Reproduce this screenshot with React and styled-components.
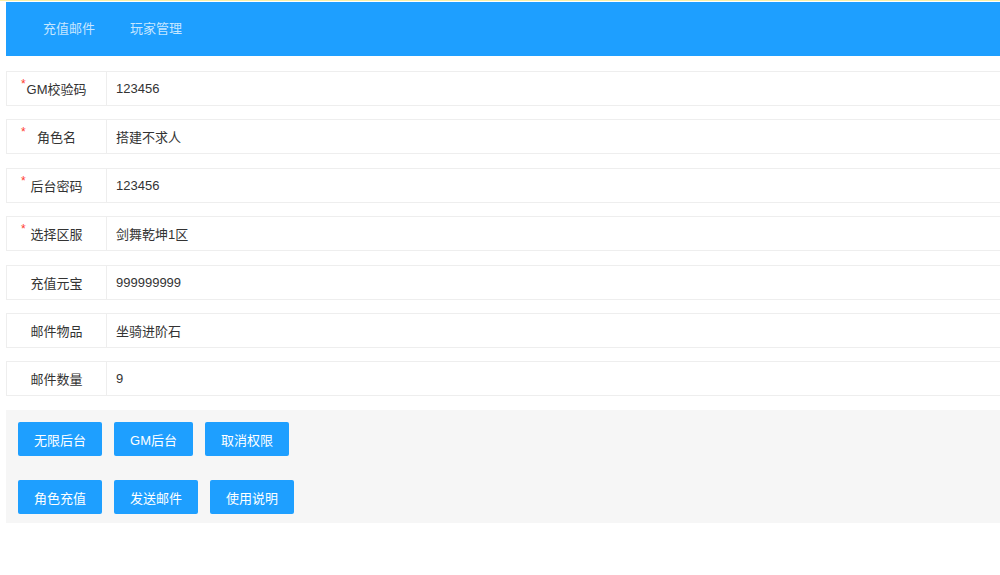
import React from 'react';
import styled, {createGlobalStyle} from 'styled-components';

const GlobalStyle = createGlobalStyle`
    html, body {
        margin: 0;
        padding: 0;
        background: #fff;
        font-family: "Liberation Sans", "Noto Sans CJK SC", sans-serif;
        font-size: 13px;
        color: #333;
    }
    body {
        border-top: 1px solid #fbeea6;
        overflow: hidden;
    }
`;

const fields = [
    {label: 'GM校验码', value: '123456', required: true},
    {label: '角色名', value: '搭建不求人', required: true},
    {label: '后台密码', value: '123456', required: true},
    {label: '选择区服', value: '剑舞乾坤1区', required: true},
    {label: '充值元宝', value: '999999999'},
    {label: '邮件物品', value: '坐骑进阶石'},
    {label: '邮件数量', value: '9'},
];

const buttonRows = [
    ['无限后台', 'GM后台', '取消权限'],
    ['角色充值', '发送邮件', '使用说明'],
];

class App extends React.Component {
    render() {
        return (
            <Page>
                <GlobalStyle/>
                <Header>
                    <NavItem>充值邮件</NavItem>
                    <NavItem>玩家管理</NavItem>
                </Header>
                <Form>
                    {fields.map(f => (
                        <Row key={f.label}>
                            <Label>
                                {f.required && <Star>*</Star>}
                                {f.label}
                            </Label>
                            <Value>{f.value}</Value>
                        </Row>
                    ))}
                </Form>
                <ButtonArea>
                    {buttonRows.map((row, i) => (
                        <ButtonRow key={i}>
                            {row.map(b => <Button key={b}>{b}</Button>)}
                        </ButtonRow>
                    ))}
                </ButtonArea>
            </Page>
        )
    }
}

export default App;

const
    Page = styled.div`
        padding: 1px 0 0 6px;
        width: 994px;
    `,
    Header = styled.div`
        height: 54px;
        background: #1e9fff;
        display: flex;
        align-items: center;
        padding-left: 20px;
        gap: 1px;
    `,
    NavItem = styled.div`
        padding: 0 17px;
        color: rgba(255, 255, 255, .75);
        font-size: 13px;
        line-height: 54px;
    `,
    Form = styled.div`
        padding-top: 15px;
        display: flex;
        flex-direction: column;
        gap: 13.4px;
    `,
    Row = styled.div`
        display: flex;
        height: 35px;
        box-sizing: border-box;
        border: 1px solid #eee;
        border-right: 0;
        background: #fff;
    `,
    Label = styled.div`
        position: relative;
        width: 99px;
        flex-shrink: 0;
        border-right: 1px solid #eee;
        display: flex;
        align-items: center;
        justify-content: center;
        color: #333;
    `,
    Star = styled.span`
        position: absolute;
        left: 14px;
        top: 6px;
        color: #ff3b30;
        font-size: 12px;
        line-height: 12px;
    `,
    Value = styled.div`
        display: flex;
        align-items: center;
        padding-left: 9px;
        color: #333;
    `,
    ButtonArea = styled.div`
        margin-top: 14px;
        height: 113px;
        box-sizing: border-box;
        background: #f6f6f6;
        padding: 12px 12px 0;
        display: flex;
        flex-direction: column;
        gap: 24px;
    `,
    ButtonRow = styled.div`
        display: flex;
        gap: 12px;
    `,
    Button = styled.button`
        height: 34px;
        padding: 0 16px;
        border: 0;
        border-radius: 2px;
        background: #1e9fff;
        color: #fff;
        font-family: inherit;
        font-size: 13px;
        cursor: pointer;
    `;
